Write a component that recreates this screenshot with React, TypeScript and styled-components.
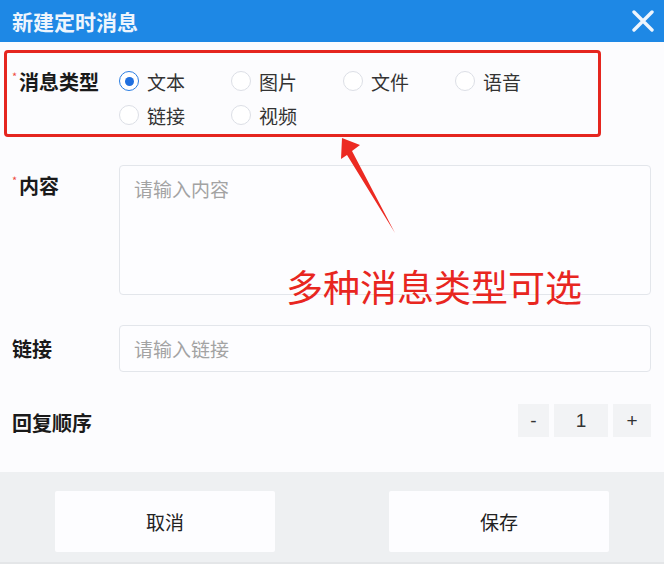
import React from 'react';
import styled, { createGlobalStyle } from 'styled-components';

const Global = createGlobalStyle`
  html, body { margin: 0; padding: 0; background: #fcfcfe; }
  body { font-family: "Noto Sans CJK SC", "Noto Sans", sans-serif; }
  * { box-sizing: border-box; }
`;

const Dialog = styled.div`
  position: relative;
  width: 664px;
  height: 564px;
  display: flex;
  flex-direction: column;
  background: #fcfcfe;
  overflow: hidden;
`;

const Header = styled.header`
  flex: none;
  height: 42px;
  background: #1e88e5;
  display: flex;
  align-items: center;
  justify-content: space-between;
  padding: 0 10px 0 12px;
`;

const Title = styled.h1`
  margin: 0;
  font-size: 21px;
  font-weight: 700;
  line-height: 1;
  color: #eef5fd;
`;

const CloseButton = styled.button`
  border: 0;
  background: none;
  padding: 0;
  width: 22px;
  height: 22px;
  display: flex;
  cursor: pointer;
`;

const Body = styled.div`
  flex: 1;
  display: flex;
  flex-direction: column;
  padding: 8px 13px 0 0;
`;

const Highlight = styled.div`
  width: 597px;
  margin-left: 4px;
  border: 3px solid #e5261f;
  border-radius: 4px;
  display: flex;
  align-items: flex-start;
  padding: 15px 0 6px 5px;
`;

const Row = styled.div<{ $gap: number; $align?: string; $justify?: string }>`
  display: flex;
  align-items: ${(p) => p.$align || 'center'};
  justify-content: ${(p) => p.$justify || 'flex-start'};
  margin-top: ${(p) => p.$gap}px;
  padding-left: 12px;
`;

const Label = styled.div<{ $offset?: number }>`
  flex: none;
  width: 107px;
  font-size: 20px;
  font-weight: 700;
  line-height: 26px;
  color: #1a1a1a;
  margin-top: ${(p) => p.$offset || 0}px;
  white-space: nowrap;
`;

const Star = styled.span`
  display: inline-block;
  vertical-align: top;
  font-size: 11px;
  line-height: 14px;
  color: #ef4b3f;
  width: 7px;
  font-weight: 400;
`;

const RadioGroup = styled.div`
  display: grid;
  grid-template-columns: repeat(4, 112px);
  row-gap: 8px;
`;

const RadioItem = styled.label`
  display: flex;
  align-items: center;
  gap: 8px;
  height: 26px;
  font-size: 19px;
  color: #333;
  cursor: pointer;
`;

const RadioCircle = styled.span<{ $checked: boolean }>`
  flex: none;
  width: 20px;
  height: 20px;
  border-radius: 50%;
  border: 1px solid ${(p) => (p.$checked ? '#2b7ee2' : '#dcdfe6')};
  background: #fff;
  display: flex;
  align-items: center;
  justify-content: center;
  &::after {
    content: '';
    display: ${(p) => (p.$checked ? 'block' : 'none')};
    width: 9px;
    height: 9px;
    border-radius: 50%;
    background: #1f6fdf;
  }
`;

const TextArea = styled.textarea`
  flex: 1;
  height: 130px;
  border: 1px solid #e3e6eb;
  border-radius: 4px;
  background: #fdfdff;
  padding: 11px 14px;
  font-family: inherit;
  font-size: 19px;
  line-height: 24px;
  resize: none;
  outline: none;
  &::placeholder { color: #a3a3a3; }
`;

const Input = styled.input`
  flex: 1;
  height: 47px;
  border: 1px solid #e3e6eb;
  border-radius: 4px;
  background: #fdfdff;
  padding: 0 14px;
  font-family: inherit;
  font-size: 19px;
  outline: none;
  &::placeholder { color: #a3a3a3; }
`;

const Stepper = styled.div`
  display: flex;
  gap: 5px;
`;

const StepCell = styled.div<{ $w: number }>`
  width: ${(p) => p.$w}px;
  height: 33px;
  background: #f2f3f5;
  display: flex;
  align-items: center;
  justify-content: center;
  font-size: 19px;
  color: #333;
  font-family: "Liberation Sans", "Noto Sans CJK SC", sans-serif;
`;

const Footer = styled.footer`
  flex: none;
  height: 92px;
  background: #eef0f2;
  display: flex;
  justify-content: space-between;
  align-items: flex-start;
  padding: 19px 55px 0;
  border-bottom: 2px solid #e4e6e8;
`;

const FooterButton = styled.button`
  width: 220px;
  height: 61px;
  border: 0;
  border-radius: 2px;
  background: #fdfdff;
  font-family: inherit;
  font-size: 19px;
  color: #222;
  cursor: pointer;
`;

const Annotation = styled.div`
  position: absolute;
  left: 286px;
  top: 268px;
  font-size: 37px;
  line-height: 1;
  color: #e8261f;
  white-space: nowrap;
  pointer-events: none;
`;

const Arrow = styled.svg`
  position: absolute;
  left: 336px;
  top: 134px;
  pointer-events: none;
`;

const types = ['文本', '图片', '文件', '语音', '链接', '视频'];

export default function App() {
  return (
    <>
      <Global />
      <Dialog>
        <Header>
          <Title>新建定时消息</Title>
          <CloseButton aria-label="关闭">
            <svg width="22" height="22" viewBox="0 0 22 22">
              <path d="M2 2 L20 20 M20 2 L2 20" stroke="#eef5fd" strokeWidth="3.4" strokeLinecap="round" />
            </svg>
          </CloseButton>
        </Header>
        <Body>
          <Highlight>
            <Label $offset={1}>
              <Star>*</Star>消息类型
            </Label>
            <RadioGroup>
              {types.map((t, i) => (
                <RadioItem key={t}>
                  <RadioCircle $checked={i === 0} />
                  {t}
                </RadioItem>
              ))}
            </RadioGroup>
          </Highlight>
          <Row $gap={28} $align="flex-start">
            <Label $offset={8}>
              <Star>*</Star>内容
            </Label>
            <TextArea placeholder="请输入内容" />
          </Row>
          <Row $gap={30}>
            <Label>链接</Label>
            <Input placeholder="请输入链接" />
          </Row>
          <Row $gap={32} $justify="space-between">
            <Label $offset={4}>回复顺序</Label>
            <Stepper>
              <StepCell $w={31}>-</StepCell>
              <StepCell $w={54}>1</StepCell>
              <StepCell $w={38}>+</StepCell>
            </Stepper>
          </Row>
        </Body>
        <Footer>
          <FooterButton>取消</FooterButton>
          <FooterButton>保存</FooterButton>
        </Footer>
        <Arrow width="64" height="104" viewBox="0 0 64 104">
          <polygon points="6,4 24,11 16,17 59,99 11,21 5,25" fill="#ec2a22" />
        </Arrow>
        <Annotation>多种消息类型可选</Annotation>
      </Dialog>
    </>
  );
}
